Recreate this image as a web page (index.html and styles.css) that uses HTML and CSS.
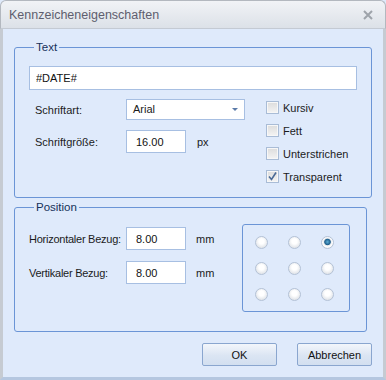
FILE: index.html
```html
<!DOCTYPE html>
<html lang="de">
<head>
    <meta charset="UTF-8">
    <title>Kennzeicheneigenschaften</title>
    <link rel="stylesheet" href="styles.css">
</head>
<body>

    <div class="window">
        <div class="titlebar">
            <span class="title">Kennzeicheneigenschaften</span>
            <svg class="close" width="10" height="10" viewBox="0 0 10 10">
                <path d="M1 1 L9 9 M9 1 L1 9" stroke="#9ea3aa" stroke-width="2" fill="none"/>
            </svg>
        </div>

        <div class="content">
            <fieldset class="group group-text">
                <legend>Text</legend>
                <input type="text" class="field field-wide" value="#DATE#">

                <div class="text-options">
                    <div class="font-grid">
                        <label class="label">Schriftart:</label>
                        <div class="select">Arial<span class="arrow"></span></div>
                        <label class="label">Schriftgröße:</label>
                        <div class="unit-row">
                            <input type="text" class="field field-num" value="16.00">
                            <span class="unit">px</span>
                        </div>
                    </div>

                    <ul class="checks">
                        <li><span class="check"></span>Kursiv</li>
                        <li><span class="check"></span>Fett</li>
                        <li><span class="check"></span>Unterstrichen</li>
                        <li>
                            <span class="check checked">
                                <svg width="11" height="11" viewBox="0 0 11 11">
                                    <path d="M2 5.5 L4.5 8.5 L9 1.5" stroke="#4a6a96" stroke-width="1.6" fill="none"/>
                                </svg>
                            </span>Transparent
                        </li>
                    </ul>
                </div>
            </fieldset>

            <fieldset class="group group-position">
                <legend>Position</legend>
                <div class="position-body">
                    <div class="offsets">
                        <div class="offset-row">
                            <label class="label label-offset">Horizontaler Bezug:</label>
                            <input type="text" class="field field-num" value="8.00">
                            <span class="unit">mm</span>
                        </div>
                        <div class="offset-row">
                            <label class="label label-offset">Vertikaler Bezug:</label>
                            <input type="text" class="field field-num" value="8.00">
                            <span class="unit">mm</span>
                        </div>
                    </div>

                    <div class="anchor-box">
                        <span class="radio"></span>
                        <span class="radio"></span>
                        <span class="radio selected"></span>
                        <span class="radio"></span>
                        <span class="radio"></span>
                        <span class="radio"></span>
                        <span class="radio"></span>
                        <span class="radio"></span>
                        <span class="radio"></span>
                    </div>
                </div>
            </fieldset>

            <div class="buttons">
                <button type="button">OK</button>
                <button type="button">Abbrechen</button>
            </div>
        </div>
    </div>

</body>
</html>
```

FILE: styles.css
```css
body {
    margin: 0;
    padding: 0;
    background-color: #ffffff;
    font-family: "Liberation Sans", Arial, sans-serif;
    font-size: 11px;
    color: #1b1b1b;
}

.window {
    width: 386px;
    height: 380px;
    display: flex;
    flex-direction: column;
    background-color: #dfeafb;
    overflow: hidden;
}

.titlebar {
    flex-shrink: 0;
    height: 27px;
    display: flex;
    align-items: center;
    justify-content: space-between;
    padding: 0 12px 0 8px;
    background: linear-gradient(#f1f3f6, #dce1e8);
    border: 1px solid #b3b8bf;
    border-bottom-color: #c4cad3;
    border-radius: 6px 6px 0 0;
}

.title {
    font-size: 12.5px;
    color: #5e5e6e;
}

.close {
    margin-top: 1px;
}

.content {
    flex: 1;
    display: flex;
    flex-direction: column;
    padding: 11px 11px 11px 11px;
    border-left: 3px solid #c6cbd2;
    border-right: 3px solid #c6cbd2;
    border-bottom: 3px solid #b5c7e0;
    box-sizing: border-box;
}

.group {
    margin: 0 5px 0 0;
    padding: 0 14px;
    border: 1px solid #6b95d6;
    border-radius: 3px;
}

.group legend {
    margin-left: 5px;
    padding: 0 2px;
    color: #15315a;
    font-size: 11.5px;
    line-height: 14px;
}

.group-text {
    padding-top: 12px;
    padding-bottom: 9px;
}

.group-position {
    margin-top: 2px;
    padding-top: 9px;
    padding-bottom: 19px;
}

.field {
    box-sizing: border-box;
    height: 23px;
    padding: 0 6px;
    border: 1px solid #a7bfe2;
    background-color: #ffffff;
    font-family: "Liberation Sans", Arial, sans-serif;
    font-size: 11px;
    color: #111111;
    outline: none;
}

.field-wide {
    display: block;
    width: 328px;
    height: 24px;
}

.field-num {
    width: 60px;
    padding-left: 9px;
}

.text-options {
    display: flex;
    margin-top: 9px;
}

.font-grid {
    display: grid;
    grid-template-columns: 91px 119px;
    grid-template-rows: 21px 23px;
    row-gap: 10px;
    align-items: center;
    padding-left: 6px;
}

.label {
    color: #1b1b1b;
}

.select {
    position: relative;
    box-sizing: border-box;
    height: 21px;
    line-height: 19px;
    padding-left: 6px;
    border: 1px solid #a7bfe2;
    background-color: #ffffff;
}

.arrow {
    position: absolute;
    right: 6px;
    top: 8px;
    width: 0;
    height: 0;
    border-left: 3px solid transparent;
    border-right: 3px solid transparent;
    border-top: 3px solid #5a7aa8;
}

.unit-row {
    display: flex;
    align-items: center;
}

.unit {
    margin-left: 11px;
}

.checks {
    list-style: none;
    margin: -3px 0 0 21px;
    padding: 0;
}

.checks li {
    display: flex;
    align-items: center;
    height: 23px;
}

.check {
    box-sizing: border-box;
    width: 13px;
    height: 13px;
    margin-right: 4px;
    display: flex;
    align-items: center;
    justify-content: center;
    border: 1px solid #a9bcd6;
    background: linear-gradient(#dcdcdc, #f4f4f4);
    box-shadow: inset 0 0 0 1px #f7f7f7;
}

.position-body {
    display: flex;
    align-items: flex-start;
}

.offsets {
    display: flex;
    flex-direction: column;
    gap: 11px;
    padding-top: 4px;
}

.offset-row {
    display: flex;
    align-items: center;
}

.label-offset {
    width: 97px;
    letter-spacing: -0.25px;
}

.offset-row .unit {
    margin-left: 10px;
}

.anchor-box {
    margin-left: auto;
    margin-right: 2px;
    margin-top: 1px;
    box-sizing: border-box;
    width: 108px;
    height: 88px;
    display: grid;
    grid-template-columns: repeat(3, 13px);
    grid-template-rows: repeat(3, 13px);
    column-gap: 20px;
    row-gap: 13px;
    padding: 11px 0 0 12px;
    border: 1px solid #6b95d6;
    border-radius: 3px;
}

.radio {
    box-sizing: border-box;
    width: 13px;
    height: 13px;
    border-radius: 50%;
    border: 1px solid #b4c2d6;
    background: radial-gradient(circle at 50% 40%, #ffffff 30%, #dde1e6 80%);
}

.radio.selected {
    background: radial-gradient(circle at 50% 45%, #5fb0d8 0, #1f5f8c 35%, #e7eaee 45%, #ffffff 60%, #dde1e6 90%);
}

.buttons {
    display: flex;
    justify-content: flex-end;
    gap: 20px;
    margin-top: 11px;
}

button {
    width: 75px;
    height: 23px;
    padding: 0;
    border: 1px solid #8aa6cf;
    border-radius: 2px;
    background: linear-gradient(#f3f6fb, #dbe5f3 55%, #d2dff0);
    font-family: "Liberation Sans", Arial, sans-serif;
    font-size: 11px;
    color: #111111;
}
```
